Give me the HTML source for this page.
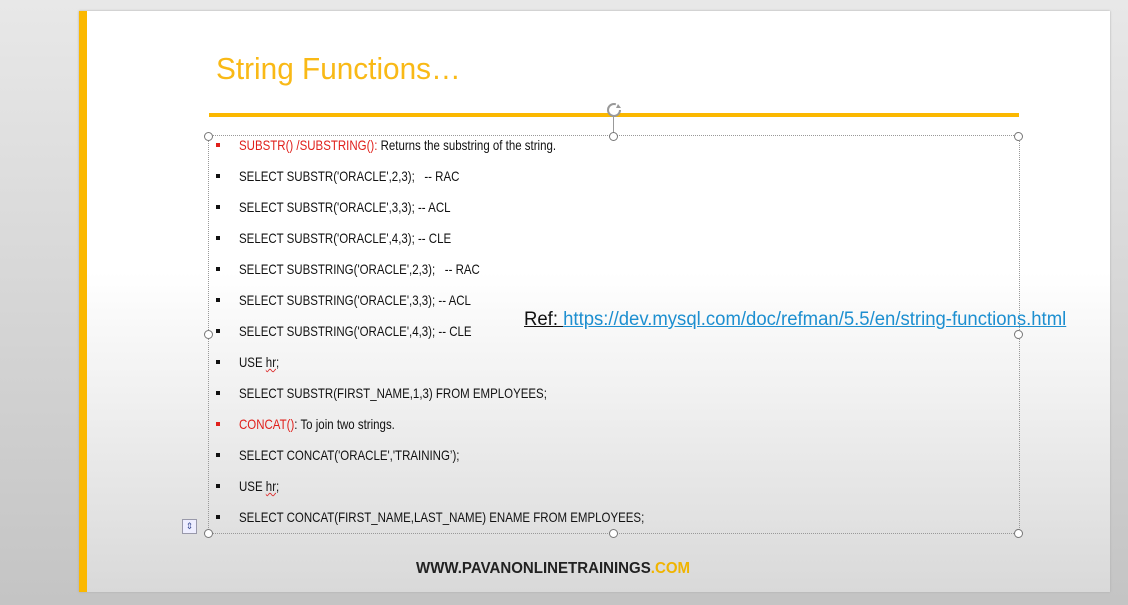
<!DOCTYPE html>
<html><head><meta charset="utf-8"><style>
html,body{margin:0;padding:0;width:1128px;height:605px;overflow:hidden;background:linear-gradient(#e8e8e8,#c4c4c4);font-family:"Liberation Sans",sans-serif;}
#slide{position:absolute;left:79px;top:11px;width:1031px;height:581px;background:linear-gradient(#ffffff 0%,#ffffff 45%,#d9d9d9 100%);box-shadow:0 0 2px #aaa;}
#bar{position:absolute;left:79px;top:11px;width:8px;height:581px;background:#fbb800;}
.t{position:absolute;white-space:nowrap;transform:scaleX(0.82);transform-origin:left center;font-size:14px;color:#111;line-height:16px;}
.b{position:absolute;left:216px;width:4px;height:4px;background:#111;}
.r{color:#e0201b}
.h{position:absolute;width:7px;height:7px;border:1px solid #777;border-radius:50%;background:#fff;}
u.s{text-decoration:underline wavy #d33;text-decoration-thickness:1px}
</style></head><body>
<div id="slide"></div><div id="bar"></div>
<div style="position:absolute;left:216px;top:51px;font-size:31px;color:#f9b916;transform:scaleX(0.96);transform-origin:left;white-space:nowrap">String Functions…</div>
<div style="position:absolute;left:209px;top:113px;width:810px;height:4px;background:#fbb800"></div>
<div style="position:absolute;left:208px;top:135px;width:810px;height:397px;border:1px dotted #999"></div>
<div style="position:absolute;left:613px;top:112px;width:1px;height:23px;background:#999"></div>
<svg style="position:absolute;left:604px;top:101px" width="20" height="18" viewBox="0 0 20 18"><circle cx="10" cy="9" r="6" fill="#fff" stroke="#999" stroke-width="2" stroke-dasharray="30 8"/><path d="M14 3 L17 7 L12 7 Z" fill="#999"/></svg>
<div class="h" style="left:204px;top:132px"></div><div class="h" style="left:609px;top:132px"></div><div class="h" style="left:1014px;top:132px"></div>
<div class="h" style="left:204px;top:330px"></div><div class="h" style="left:1014px;top:330px"></div>
<div class="h" style="left:204px;top:529px"></div><div class="h" style="left:609px;top:529px"></div><div class="h" style="left:1014px;top:529px"></div>
<div style="position:absolute;left:182px;top:519px;width:13px;height:13px;border:1px solid #99a;background:#eef;font-size:9px;line-height:13px;text-align:center;color:#459">⇕</div>

<div class="b" style="top:143px;background:#e0201b"></div><div class="t" style="left:239px;top:137px"><span class="r">SUBSTR() /SUBSTRING():</span> Returns the substring of the string.</div>
<div class="b" style="top:174px"></div><div class="t" style="left:239px;top:168px">SELECT SUBSTR('ORACLE',2,3); &nbsp;&nbsp;-- RAC</div>
<div class="b" style="top:205px"></div><div class="t" style="left:239px;top:199px">SELECT SUBSTR('ORACLE',3,3); -- ACL</div>
<div class="b" style="top:236px"></div><div class="t" style="left:239px;top:230px">SELECT SUBSTR('ORACLE',4,3); -- CLE</div>
<div class="b" style="top:267px"></div><div class="t" style="left:239px;top:261px">SELECT SUBSTRING('ORACLE',2,3); &nbsp;&nbsp;-- RAC</div>
<div class="b" style="top:298px"></div><div class="t" style="left:239px;top:292px">SELECT SUBSTRING('ORACLE',3,3); -- ACL</div>
<div class="b" style="top:329px"></div><div class="t" style="left:239px;top:323px">SELECT SUBSTRING('ORACLE',4,3); -- CLE</div>
<div class="b" style="top:360px"></div><div class="t" style="left:239px;top:354px">USE <u class="s">hr</u>;</div>
<div class="b" style="top:391px"></div><div class="t" style="left:239px;top:385px">SELECT SUBSTR(FIRST_NAME,1,3) FROM EMPLOYEES;</div>
<div class="b" style="top:422px;background:#e0201b"></div><div class="t" style="left:239px;top:416px"><span class="r">CONCAT()</span>: To join two strings.</div>
<div class="b" style="top:453px"></div><div class="t" style="left:239px;top:447px">SELECT CONCAT('ORACLE','TRAINING’);</div>
<div class="b" style="top:484px"></div><div class="t" style="left:239px;top:478px">USE <u class="s">hr</u>;</div>
<div class="b" style="top:515px"></div><div class="t" style="left:239px;top:509px">SELECT CONCAT(FIRST_NAME,LAST_NAME) ENAME FROM EMPLOYEES;</div>

<div class="t" style="left:524px;top:309px;font-size:19px;line-height:22px;transform:scaleX(0.975)"><u>Ref: </u><u style="color:#1d8fd0">https://dev.mysql.com/doc/refman/5.5/en/string-functions.html</u></div>
<div style="position:absolute;left:416px;top:560px;font-size:16px;font-weight:bold;color:#222;white-space:nowrap;transform:scaleX(0.94);transform-origin:left">WWW.PAVANONLINETRAININGS<span style="color:#f0b400">.COM</span></div>
</body></html>
